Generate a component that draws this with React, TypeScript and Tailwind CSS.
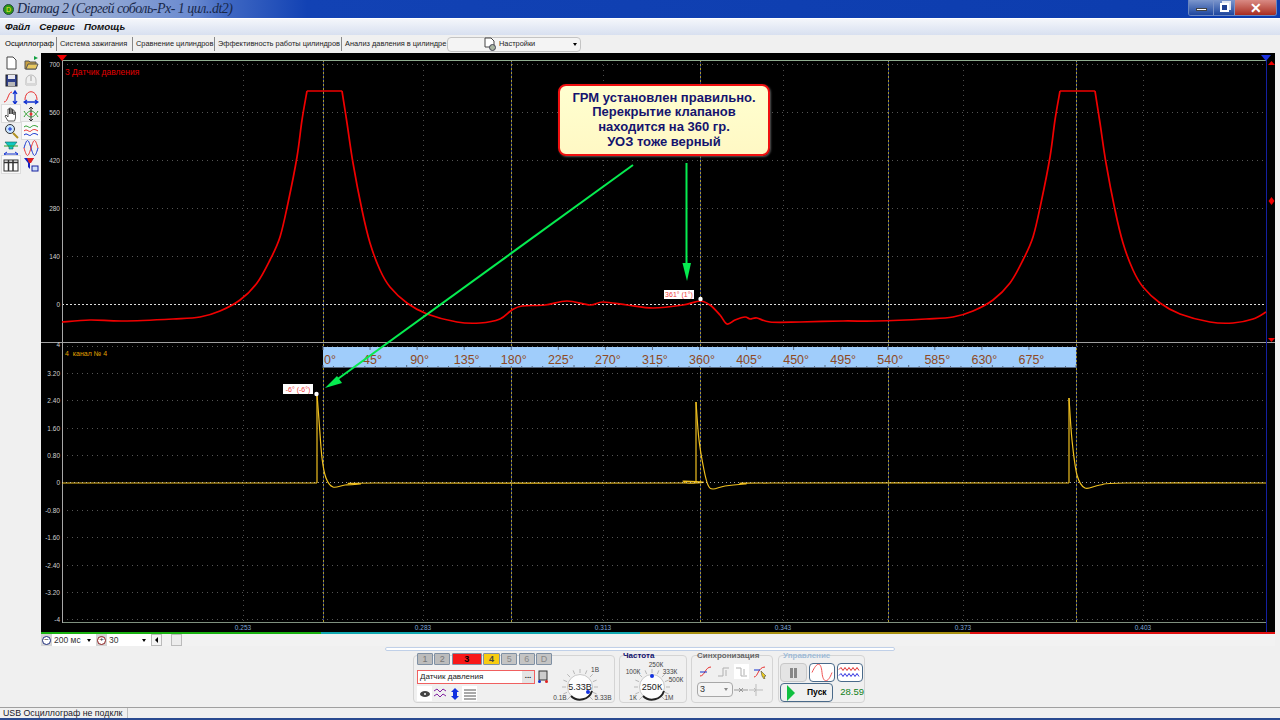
import React from 'react'

const SANS = "font-['Liberation_Sans',Arial,sans-serif]"

const upperGrid = [64, 112, 160, 208, 256]
const lowerGrid = [346, 373, 400, 428, 455, 510, 537, 565, 592, 619]
const timeGrid = [
  { x: 243, label: '0.253' },
  { x: 423, label: '0.283' },
  { x: 603, label: '0.313' },
  { x: 783, label: '0.343' },
  { x: 963, label: '0.373' },
  { x: 1143, label: '0.403' },
]
const phaseLines = [323, 511, 700, 888, 1076]
const upperTicks = [
  { y: 64, label: '700' },
  { y: 112, label: '560' },
  { y: 160, label: '420' },
  { y: 208, label: '280' },
  { y: 256, label: '140' },
  { y: 304, label: '0' },
]
const lowerTicks = [
  { y: 344, label: '4' },
  { y: 373, label: '3.20' },
  { y: 400, label: '2.40' },
  { y: 428, label: '1.60' },
  { y: 455, label: '0.80' },
  { y: 482, label: '0' },
  { y: 510, label: '-0.80' },
  { y: 537, label: '-1.60' },
  { y: 565, label: '-2.40' },
  { y: 592, label: '-3.20' },
  { y: 619, label: '-4' },
]
const degrees = Array.from({ length: 16 }, (_, i) => i * 45)

// catmull-rom through the sampled points, corners are breaks between segments
function smooth(points: string) {
  const pts = points.split(' ').map((p) => p.split(',').map(Number))
  let d = `M${pts[0][0]} ${pts[0][1]}`
  for (let i = 0; i < pts.length - 1; i++) {
    const p0 = pts[i - 1] ?? pts[i]
    const p1 = pts[i]
    const p2 = pts[i + 1]
    const p3 = pts[i + 2] ?? p2
    const c1x = p1[0] + (p2[0] - p0[0]) / 6
    const c1y = p1[1] + (p2[1] - p0[1]) / 6
    const c2x = p2[0] - (p3[0] - p1[0]) / 6
    const c2y = p2[1] - (p3[1] - p1[1]) / 6
    d += `C${c1x} ${c1y} ${c2x} ${c2y} ${p2[0]} ${p2[1]}`
  }
  return d
}

const pressure = [
  '62,322 90,320 123,321 173,319 200,317 220,311 240,300 257,283 270,260 280,237 288,203 297,157 302,120 307,91',
  '307,91 342,91',
  '342,91 347,123 353,163 362,210 370,243 380,270 390,287 407,303 427,314 457,322 480,323 500,319 512,310 522,306 545,305 567,301 590,305 603,302 627,305 653,308 683,305 700,301 710,305 720,315 727,324 735,320 745,317 750,319 757,318 770,322 800,322 843,321 876,321 926,319 953,317 973,311 993,300 1010,283 1023,260 1033,237 1041,203 1050,157 1055,120 1060,91',
  '1060,91 1095,91',
  '1095,91 1100,123 1106,163 1115,210 1123,243 1133,270 1143,287 1160,303 1180,314 1210,322 1233,323 1253,319 1266,312',
]
const ignition = [
  '62,483 317,483',
  '317,483 317,394',
  '317,394 319,420 322,458 326,478 333,487 345,485 360,484 375,483 680,483 683,481 686,483 696,483',
  '696,483 696,402',
  '696,402 699,440 704,470 708,485 713,489 725,486 745,484 770,483 1069,483',
  '1069,483 1069,398',
  '1069,398 1072,440 1077,475 1085,488 1100,485 1125,483 1266,483',
]

function Oscilloscope() {
  return (
    <svg viewBox="41 53 1234 579" className="block h-[579px] w-[1234px] bg-black">
      {upperGrid.concat(lowerGrid).map((y) => (
        <line key={y} x1={62} x2={1266} y1={y + 0.5} y2={y + 0.5} stroke="#555" strokeDasharray="1 4" />
      ))}
      {timeGrid.map((t) => (
        <line key={t.x} x1={t.x + 0.5} x2={t.x + 0.5} y1={60} y2={622} stroke="#4d4d4d" strokeDasharray="1 4" />
      ))}
      {phaseLines.map((x) => (
        <g key={x}>
          <line x1={x + 0.5} x2={x + 0.5} y1={60} y2={622} stroke="#23307a" />
          <line x1={x + 0.5} x2={x + 0.5} y1={60} y2={622} stroke="#a89a30" strokeDasharray="2 2" />
        </g>
      ))}
      <line x1={62} x2={1266} y1={304.5} y2={304.5} stroke="#ddd" strokeDasharray="2 2" />
      <line x1={62} x2={1266} y1={60.5} y2={60.5} stroke="#90ad90" />
      <line x1={62} x2={1266} y1={622.5} y2={622.5} stroke="#7f907f" />
      <line x1={41} x2={1275} y1={342.5} y2={342.5} stroke="#a0a0a0" />
      <line x1={62.5} x2={62.5} y1={60} y2={623} stroke="#a8a8a8" />
      <line x1={1266.5} x2={1266.5} y1={60} y2={632} stroke="#1420a0" />

      <polygon points="57,55 67,55 62,61" fill="#f00000" />
      <polygon points="1261,55 1271,55 1266,61" fill="#1a30e0" />
      <polygon points="1268,65 1275,65 1271.5,61" fill="#f00000" />
      <polygon points="1271.5,197 1274.5,201 1271.5,205 1268.5,201" fill="#f00000" />
      <polygon points="1268,338 1275,338 1271.5,342" fill="#f00000" />

      {upperTicks.concat(lowerTicks).map((t) => (
        <text key={t.y} x={60} y={t.y + 2.5} textAnchor="end" fontSize={6.5} fontFamily="Liberation Sans" fill="#d0d0d0">
          {t.label}
        </text>
      ))}
      {timeGrid.map((t) => (
        <text key={t.x} x={t.x} y={630} textAnchor="middle" fontSize={6.5} fontFamily="Liberation Sans" fill="#7fa6d8">
          {t.label}
        </text>
      ))}
      <text x={65} y={75} fontSize={8.5} fontFamily="Liberation Sans" fill="#e00000">
        3 Датчик давления
      </text>
      <text x={65} y={356} fontSize={7} fontFamily="Liberation Sans" fill="#e0a000" xmlSpace="preserve">
        4  канал № 4
      </text>

      <rect x={323} y={347} width={753} height={21} fill="#a0cdfb" />
      <line x1={323} x2={1076} y1={367.5} y2={367.5} stroke="#5a6a80" />
      {Array.from({ length: 73 }, (_, i) => 323 + (i * 753) / 72).map((x, i) => (
        <line key={x} x1={x} x2={x} y1={i % 8 === 0 ? 365 : 366} y2={368} stroke="#5a6a80" />
      ))}
      {degrees.map((d) => (
        <line key={d} x1={323 + (d * 753) / 720} x2={323 + (d * 753) / 720} y1={347} y2={350} stroke="#5a6a80" />
      ))}
      {degrees.map((d) => (
        <text
          key={d}
          x={d === 0 ? 324 : 325.5 + (d * 753) / 720}
          y={364}
          textAnchor={d === 0 ? 'start' : 'middle'}
          fontSize={12.5}
          fontFamily="Liberation Sans"
          fill="#8f4a24"
        >
          {d}°
        </text>
      ))}

      {pressure.map((p) => (
        <path key={p} d={smooth(p)} fill="none" stroke="#f00000" strokeWidth={1.7} strokeLinejoin="round" />
      ))}
      {ignition.map((p) => (
        <path key={p} d={smooth(p)} fill="none" stroke="#f0c020" strokeWidth={1.2} />
      ))}
      <line x1={62} x2={1266} y1={482.5} y2={482.5} stroke="#ddd" strokeOpacity={0.7} strokeDasharray="1 3" />

      <rect x={664} y={290} width={30} height={9} fill="#fff" />
      <text x={679} y={297} textAnchor="middle" fontSize={7} fontFamily="Liberation Sans" fill="#f04040">
        361° (1°)
      </text>
      <circle cx={700.5} cy={299} r={2.2} fill="#fff" />
      <rect x={283} y={384} width={30} height={10} fill="#fff" />
      <text x={298} y={392} textAnchor="middle" fontSize={7} fontFamily="Liberation Sans" fill="#f04040">
        -6° (-6°)
      </text>
      <circle cx={316.5} cy={394} r={2.2} fill="#fff" />

      <line x1={633} y1={165} x2={335} y2={381} stroke="#06ec50" strokeWidth={2} />
      <polygon points="325,388 337,376 342,383" fill="#06ec50" />
      <line x1={686.5} y1={163} x2={686.5} y2={270} stroke="#06ec50" strokeWidth={2} />
      <polygon points="687,281 682.5,263 691,263" fill="#06ec50" />
    </svg>
  )
}

function Callout() {
  return (
    <div className={`absolute left-[517px] top-[31px] flex h-[72px] w-[212px] flex-col items-center justify-center rounded-lg border-2 border-[#f01010] bg-gradient-to-b from-[#ffffd0] to-[#fff8c4] text-center text-[13px] font-bold leading-[14.6px] text-[#14146e] shadow-[1px_1px_2px_#555] ${SANS}`}>
      <span>ГРМ установлен правильно.</span>
      <span>Перекрытие клапанов</span>
      <span>находится на 360 гр.</span>
      <span>УОЗ тоже верный</span>
    </div>
  )
}

function ToolIcon({ children, active }: { children: React.ReactNode; active?: boolean }) {
  return (
    <div className={`flex h-[17px] w-[18px] items-center justify-center ${active ? 'bg-[#fafafa] outline outline-1 outline-[#dcdcdc]' : ''}`}>
      <svg viewBox="0 0 16 16" className="h-4 w-4">
        {children}
      </svg>
    </div>
  )
}

function Toolbar() {
  return (
    <div className="grid w-[41px] shrink-0 grid-cols-2 content-start gap-x-px gap-y-0 pl-[2px] pt-[1px]">
      <ToolIcon>
        <path d="M4 2h6l3 3v9H4z" fill="#fff" stroke="#444" />
      </ToolIcon>
      <ToolIcon>
        <path d="M2 6h4l1 1h6v7H2z" fill="#c8a040" stroke="#555" />
        <path d="M3 14l2-5h10l-2 5z" fill="#e8c860" stroke="#555" />
        <path d="M11 1l4 2-4 2z" fill="#10a040" />
      </ToolIcon>
      <ToolIcon>
        <rect x="3" y="3" width="11" height="11" fill="#30408a" stroke="#222" />
        <rect x="5" y="3" width="7" height="4" fill="#e8e8f0" />
        <rect x="5" y="10" width="7" height="4" fill="#b8b8b8" />
      </ToolIcon>
      <ToolIcon>
        <path d="M3 13V8a5 5 0 0 1 10 0v5z" fill="none" stroke="#b8b8b8" />
        <path d="M8 4v5" stroke="#a0a0a0" />
        <rect x="3" y="11" width="10" height="3" fill="#d8d8d8" />
      </ToolIcon>
      <ToolIcon>
        <path d="M1 13c4 0 4-10 8-10" fill="none" stroke="#e83030" />
        <path d="M12 3v11M10 5l2-3 2 3M10 12l2 3 2-3" fill="none" stroke="#1030d0" strokeWidth="1.3" />
      </ToolIcon>
      <ToolIcon>
        <path d="M2 11C2 0 14 0 14 11" fill="none" stroke="#e83030" />
        <path d="M2 13h12M4 11l-3 2 3 2M12 11l3 2-3 2" fill="none" stroke="#1030d0" strokeWidth="1.3" />
      </ToolIcon>
      <ToolIcon active>
        <path d="M5 15L2 10l1-1 2 2V3h1.500v5V2H8v6V3h1.500v5V4H11v5V6h1.500v6l-1 3z" fill="#fff" stroke="#333" strokeWidth=".8" />
      </ToolIcon>
      <ToolIcon>
        <path d="M1 5c5 8 9 8 14 0M1 11c5-8 9-8 14 0" fill="none" stroke="#30a030" />
        <path d="M8 1v14M6 3l2-2 2 2M6 13l2 2 2-2" fill="none" stroke="#333" />
        <circle cx="8" cy="8" r="1.500" fill="#e83030" />
      </ToolIcon>
      <ToolIcon>
        <circle cx="7" cy="6" r="4.500" fill="#c8e4ff" stroke="#333" />
        <path d="M5 6h4M7 4v4" stroke="#1030d0" />
        <path d="M10 10l5 5" stroke="#b09020" strokeWidth="2" />
      </ToolIcon>
      <ToolIcon active>
        <path d="M1 4c3-3 5 2 7 0s4-2 7 0" fill="none" stroke="#30a030" />
        <path d="M1 8c3-3 5 2 7 0s4-2 7 0" fill="none" stroke="#e83030" />
        <path d="M1 12c3-3 5 2 7 0s4-2 7 0" fill="none" stroke="#1030d0" />
      </ToolIcon>
      <ToolIcon>
        <path d="M2 2h12l-4 5v2H6V7z" fill="#10c8c0" stroke="#106060" strokeWidth=".6" />
        <path d="M1 6l14 0" stroke="#30a030" />
        <path d="M2 14h12M4 12l-3 2 3 2M12 12l3 2-3 2" fill="none" stroke="#1030d0" />
      </ToolIcon>
      <ToolIcon>
        <path d="M1 8c3-10 4-10 7 0s4 10 7 0" fill="none" stroke="#1030d0" />
        <path d="M1 8c3 10 4 10 7 0s4-10 7 0" fill="none" stroke="#e83030" />
      </ToolIcon>
      <ToolIcon active>
        <rect x="1" y="3" width="14" height="11" fill="#fff" stroke="#333" />
        <path d="M1 5.500h14M5.500 3v11M10 3v11" stroke="#333" strokeWidth="1.500" />
      </ToolIcon>
      <ToolIcon>
        <path d="M1 1h10L7 6v6L5 10V6z" fill="#1420c0" />
        <path d="M4 1h7L8 6H6z" fill="#e02020" />
        <rect x="9" y="9" width="6" height="5" fill="#d0e0f8" stroke="#1420a0" />
      </ToolIcon>
    </div>
  )
}

const tabs = [
  { label: 'Система зажигания', w: 'w-[76px]' },
  { label: 'Сравнение цилиндров', w: 'w-[82px]' },
  { label: 'Эффективность работы цилиндров', w: 'w-[127px]' },
  { label: 'Анализ давления в цилиндре', w: 'w-[101px]' },
]

function TabRow() {
  return (
    <div className={`flex h-[18px] items-center bg-[#f0f0f0] pl-[5px] text-[7.4px] text-[#222] ${SANS}`}>
      <div className="w-[51px] whitespace-nowrap text-[7.6px] font-medium text-black">Осциллограф</div>
      {tabs.map((t) => (
        <div key={t.label} className={`${t.w} h-[14px] whitespace-nowrap border-l border-[#888] pl-[3px] leading-[14px]`}>
          {t.label}
        </div>
      ))}
      <div className="ml-[5px] flex h-[15px] w-[134px] items-center rounded-sm border border-[#c4c4c4] bg-[#f4f4f4] pl-[35px] pr-[3px]">
        <svg viewBox="0 0 14 14" className="h-[14px] w-[14px]">
          <path d="M2 1h6l3 3v6H2z" fill="#fff" stroke="#444" />
          <circle cx="9.500" cy="10.500" r="3" fill="#a8b4a0" stroke="#445" />
        </svg>
        <span className="ml-[2px]">Настройки</span>
        <span className="ml-auto h-0 w-0 border-x-[2.5px] border-t-[3px] border-x-transparent border-t-black" />
      </div>
    </div>
  )
}

function WindowControls() {
  return (
    <div className="mr-[3px] flex h-[16px] overflow-hidden rounded-b-[3px] border border-t-0 border-[#6a86c0]">
      <div className="flex w-[24px] items-center justify-center bg-gradient-to-b from-[#7c96cc] to-[#1f469e]">
        <span className="mt-[4px] h-[3px] w-[11px] border border-[#444] bg-white" />
      </div>
      <div className="flex w-[22px] items-center justify-center border-x border-[#7a92c8] bg-gradient-to-b from-[#7c96cc] to-[#1f469e]">
        <span className="relative h-[9px] w-[9px] border-2 border-white bg-[#1f3f90] shadow-[2px_-2px_0_0_#dfe4f0]" />
      </div>
      <div className={`flex w-[41px] items-center justify-center bg-gradient-to-b from-[#d98a84] to-[#a82a20] text-[14px] font-bold leading-none text-white ${SANS}`}>
        ✕
      </div>
    </div>
  )
}

const channels = [
  { label: '1', cls: 'w-[17px] bg-[#bcbcbc] text-[#777]' },
  { label: '2', cls: 'w-[17px] bg-[#bcbcbc] text-[#777]' },
  { label: '3', cls: 'w-[32px] bg-[#f81818] text-black font-bold' },
  { label: '4', cls: 'w-[18px] bg-[#f8cc10] text-[#444] font-bold' },
  { label: '5', cls: 'w-[17px] bg-[#c4c4c4] text-[#888]' },
  { label: '6', cls: 'w-[17px] bg-[#c4c4c4] text-[#888]' },
  { label: 'D', cls: 'w-[17px] bg-[#c4c4c4] text-[#888]' },
]

interface KnobProps {
  value: string
  size: [number, number]
  cx: number
  cy: number
  marker: [number, number]
  labels: { x: number; y: number; t: string }[]
}

function Knob({ value, size, cx, cy, marker, labels }: KnobProps) {
  return (
    <svg viewBox={`0 0 ${size[0]} ${size[1]}`} width={size[0]} height={size[1]} className="block shrink-0">
      {Array.from({ length: 13 }, (_, i) => (-135 + i * 22.5) * (Math.PI / 180)).map((a) => (
        <line
          key={a}
          x1={cx + Math.sin(a) * 14}
          y1={cy - Math.cos(a) * 14}
          x2={cx + Math.sin(a) * 18}
          y2={cy - Math.cos(a) * 18}
          stroke="#b8b8b8"
        />
      ))}
      <circle cx={cx} cy={cy} r={12.5} fill="#fdfdfd" stroke="#c8c8c8" />
      <path d={`M${cx - 9} ${cy + 9}A12.700 12.700 0 0 0 ${cx + 12} ${cy + 4}`} fill="none" stroke="#222" strokeWidth="2" />
      <text x={cx} y={cy + 3} textAnchor="middle" fontSize={9} fontFamily="Liberation Sans" fill="#222">
        {value}
      </text>
      <circle cx={marker[0]} cy={marker[1]} r={2} fill="#1030e0" />
      {labels.map((l) => (
        <text key={l.t} x={l.x} y={l.y} textAnchor="middle" fontSize={6.5} fontFamily="Liberation Sans" fill="#444">
          {l.t}
        </text>
      ))}
    </svg>
  )
}

function SmallIcon({ children, active }: { children: React.ReactNode; active?: boolean }) {
  return (
    <div className={`flex h-[15px] w-[15px] shrink-0 items-center justify-center ${active ? 'bg-white' : ''}`}>
      <svg viewBox="0 0 14 14" className="h-[14px] w-[14px]">
        {children}
      </svg>
    </div>
  )
}

function ChannelPanel() {
  return (
    <div className={`flex h-[48px] w-[202px] rounded border border-[#d4d4d4] pl-[3px] ${SANS}`}>
      <div className="w-[135px] shrink-0">
        <div className="-mt-[3px] flex gap-[1.5px]">
          {channels.map((c) => (
            <div key={c.label} className={`${c.cls} h-[12px] rounded-[1px] border border-[#7f90a4] text-center text-[9px] leading-[11px]`}>
              {c.label}
            </div>
          ))}
        </div>
        <div className="mt-[5px] flex items-center">
          <div className="flex h-[14px] w-[118px] items-center justify-between border border-[#f06060] bg-white pl-[2px] text-[8px] text-[#222]">
            Датчик давления
            <span className="h-[12px] w-[12px] bg-[#e4e4e4] text-center text-[8px] font-bold leading-[9px]">...</span>
          </div>
          <svg viewBox="0 0 12 14" className="ml-[2px] h-[14px] w-[12px]">
            <rect x="2" y="1" width="8" height="9" fill="#ccc" stroke="#333" />
            <circle cx="2.500" cy="11.500" r="1.500" fill="#1030d0" />
            <circle cx="9.500" cy="11.500" r="1.500" fill="#e02020" />
          </svg>
        </div>
        <div className="mt-[2px] flex">
          <SmallIcon active>
            <ellipse cx="7" cy="7" rx="5" ry="3" fill="#444" />
            <circle cx="7" cy="7" r="1" fill="#fff" />
          </SmallIcon>
          <SmallIcon>
            <path d="M1 4l3-2 3 3 3-3 3 2M1 9l3-2 3 3 3-3 3 2" fill="none" stroke="#8020a0" />
          </SmallIcon>
          <SmallIcon>
            <path d="M7 1l4 4H9v4h2l-4 4-4-4h2V5H3z" fill="#1030e0" />
          </SmallIcon>
          <SmallIcon active>
            <path d="M1 3h12M1 6h12M1 9h12M1 12h12" stroke="#555" />
          </SmallIcon>
        </div>
      </div>
      <Knob
        value="5.33В"
        size={[62, 46]}
        cx={28}
        cy={31}
        marker={[36, 36]}
        labels={[
          { x: 43, y: 16, t: '1В' },
          { x: 8, y: 44, t: '0.1В' },
          { x: 51, y: 44, t: '5.33В' },
        ]}
      />
    </div>
  )
}

function GroupTitle({ children, cls }: { children: React.ReactNode; cls: string }) {
  return <div className={`-mt-[5px] h-[10px] pl-[3px] text-[8px] font-bold leading-[10px] ${cls}`}>{children}</div>
}

function FrequencyPanel() {
  return (
    <div className={`h-[48px] w-[68px] rounded border border-[#d4d4d4] ${SANS}`}>
      <GroupTitle cls="text-[#10106e]">Частота</GroupTitle>
      <Knob
        value="250К"
        size={[66, 40]}
        cx={32}
        cy={26}
        marker={[32, 15]}
        labels={[
          { x: 36, y: 6, t: '250К' },
          { x: 13, y: 13, t: '100К' },
          { x: 50, y: 13, t: '333К' },
          { x: 56, y: 21, t: '500К' },
          { x: 13, y: 39, t: '1К' },
          { x: 49, y: 39, t: '1М' },
        ]}
      />
    </div>
  )
}

function SyncPanel() {
  return (
    <div className={`h-[48px] w-[82px] rounded border border-[#d4d4d4] pl-[5px] ${SANS}`}>
      <GroupTitle cls="-ml-[3px] text-[#666]">Синхронизация</GroupTitle>
      <div className="ml-[1px] mt-[3px] flex gap-[3px]">
        <SmallIcon>
          <path d="M1 11C6 11 6 2 12 2" fill="none" stroke="#e83030" />
          <path d="M1 7h7" stroke="#1030d0" />
        </SmallIcon>
        <SmallIcon>
          <path d="M1 11h5V3h6M9 5v6" fill="none" stroke="#b0b0b0" />
        </SmallIcon>
        <SmallIcon active>
          <path d="M1 3h5v8h6M9 4v6" fill="none" stroke="#b0b0b0" />
        </SmallIcon>
        <SmallIcon>
          <path d="M1 12C5 12 5 2 12 2" fill="none" stroke="#e83030" />
          <path d="M1 5h6" stroke="#1030d0" />
          <path d="M8 6l5 5-2 .5 1 2-1 .5-2-3z" fill="#f0d020" stroke="#333" strokeWidth=".5" />
        </SmallIcon>
      </div>
      <div className="mt-[3px] flex items-center">
        <div className="flex h-[15px] w-[36px] items-center justify-between rounded-sm border border-[#a8a8a8] bg-[#f4f4f4] px-[2px] text-[9px] text-[#333]">
          3<span className="mr-[2px] h-0 w-0 border-x-[2.5px] border-t-[3px] border-x-transparent border-t-[#888]" />
        </div>
        <SmallIcon>
          <path d="M0 7h14M5 5l2 2-2 2M9 5L7 7l2 2" fill="none" stroke="#999" />
        </SmallIcon>
        <SmallIcon>
          <path d="M0 7h14M7 1v12M5 5l2 2-2 2" fill="none" stroke="#bbb" />
        </SmallIcon>
      </div>
    </div>
  )
}

function ControlPanel() {
  return (
    <div className={`ml-[1px] h-[48px] w-[87px] rounded border border-[#d4d4d4] pl-[1px] ${SANS}`}>
      <GroupTitle cls="text-[#a0bcd8]">Управление</GroupTitle>
      <div className="mt-[2px] flex gap-[2px]">
        <div className="flex h-[19px] w-[27px] items-center justify-center gap-px rounded-sm border border-[#c8c8c8] bg-[#e4e4e4]">
          <span className="h-[10px] w-[3px] bg-[#888]" />
          <span className="h-[10px] w-[3px] bg-[#888]" />
        </div>
        <div className="h-[19px] w-[26px] rounded-sm border border-[#4a6a8a] bg-white">
          <svg viewBox="0 0 24 16" className="block h-full w-full">
            <path d="M2 8c5-11 9-11 10 0s6 11 10 0" fill="none" stroke="#f05050" />
          </svg>
        </div>
        <div className="h-[19px] w-[26px] rounded-sm border border-[#4a6a8a] bg-white">
          <svg viewBox="0 0 24 16" className="block h-full w-full">
            <path d="M1 5l2-2 2 3 2-3 2 3 2-3 2 3 2-3 2 3 2-3 2 3" fill="none" stroke="#e03030" />
            <path d="M1 11l2-2 2 3 2-3 2 3 2-3 2 3 2-3 2 3 2-3 2 3" fill="none" stroke="#3030e0" />
          </svg>
        </div>
      </div>
      <div className="mt-[1px] flex items-center">
        <div className="flex h-[19px] w-[55px] items-center rounded-sm border border-[#4a6a8a] bg-[#f0f0f0] pl-[6px] text-[8.5px] font-bold text-black">
          <span className="h-0 w-0 border-y-[8px] border-l-[8px] border-y-transparent border-l-[#10c040]" />
          <span className="ml-[12px]">Пуск</span>
        </div>
        <span className="ml-[7px] text-[9.5px] text-[#108020]">28.59</span>
      </div>
    </div>
  )
}

function ScrollRow() {
  return (
    <div className={`flex h-[12px] items-center bg-[#f2f2f2] text-[8.5px] text-[#333] ${SANS}`}>
      <div className="flex h-[12px] w-[11px] items-center justify-center bg-[#d4d4d4]">
        <span className="flex h-[9px] w-[9px] items-center justify-center rounded-full border border-[#1a2a7a] bg-white text-[8px] leading-none">−</span>
      </div>
      <div className="flex h-full w-[44px] items-center justify-between bg-white pl-[2px] pr-[5px]">
        200 мс
        <span className="h-0 w-0 border-x-[2.5px] border-t-[3px] border-x-transparent border-t-black" />
      </div>
      <div className="flex h-[12px] w-[11px] items-center justify-center bg-[#d4d4d4]">
        <span className="flex h-[9px] w-[9px] items-center justify-center rounded-full border border-[#8a1a1a] bg-white text-[8px] leading-none">+</span>
      </div>
      <div className="flex h-full w-[44px] items-center justify-between bg-white pl-[2px] pr-[5px]">
        30
        <span className="h-0 w-0 border-x-[2.5px] border-t-[3px] border-x-transparent border-t-black" />
      </div>
      <div className="flex h-full w-[11px] items-center justify-center border border-[#bbb] bg-[#f4f4f4]">
        <span className="h-0 w-0 border-y-[3px] border-r-[3px] border-y-transparent border-r-black" />
      </div>
      <div className="w-[9px]" />
      <div className="h-full w-[11px] border border-[#bbb] bg-[#ececec]" />
      <div className="flex-1 bg-[#f6f6f6]" />
    </div>
  )
}

export default function App() {
  return (
    <div className={`flex h-[720px] w-[1280px] flex-col overflow-hidden bg-[#f0f0f0] ${SANS}`}>
      <div className="flex h-[18px] shrink-0 items-start justify-between bg-[linear-gradient(90deg,#a8b6d4_0%,#92a8d4_8%,#6a8ad0_15%,#3d66c2_18%,#1242b4_24%,#0c3cae_100%)]">
        <div className="flex items-center pl-[3px]">
          <span className="mt-px flex h-[11px] w-[11px] items-center justify-center rounded-full border border-[#244] bg-[#2e9a10] text-[7px] leading-none text-[#f0e040]">D</span>
          <span className="ml-[3px] font-['Liberation_Serif',serif] text-[14px] italic leading-[18px] tracking-[-0.5px] text-[#18284a]">
            Diamag 2 (Сергей соболь-Рх- 1 цил..dt2)
          </span>
        </div>
        <WindowControls />
      </div>

      <div className="flex h-[17px] shrink-0 items-center gap-[9px] border-t border-white bg-gradient-to-b from-[#f4f6fb] to-[#d8e0f0] pl-[5px] text-[9.8px] font-bold italic text-[#111]">
        <span>Файл</span>
        <span>Сервис</span>
        <span>Помощь</span>
      </div>

      <TabRow />

      <div className="flex shrink-0">
        <Toolbar />
        <div className="relative w-[1234px]">
          <Oscilloscope />
          <Callout />
          <div className="flex h-[2px]">
            <div className="w-[280px] bg-[#18b010]" />
            <div className="w-[319px] bg-[#10a8b0]" />
            <div className="w-[330px] bg-[#a89010]" />
            <div className="flex-1 bg-[#e01010]" />
          </div>
          <ScrollRow />
        </div>
      </div>

      <div className="flex h-[61px] shrink-0 flex-col">
        <div className="ml-[385px] mt-[1px] h-[4px] w-[510px] rounded-sm border border-[#c0d0e8] bg-white" />
        <div className="ml-[413px] mt-[4px] flex gap-[4px]">
          <ChannelPanel />
          <FrequencyPanel />
          <SyncPanel />
          <ControlPanel />
        </div>
      </div>

      <div className="flex h-[11px] shrink-0 border-t border-[#a0a0a0] text-[8.8px] font-medium leading-[10px] text-[#1a1a2a]">
        <div className="w-[128px] whitespace-nowrap border-r border-[#c0c0c0] pl-[3px]">USB Осциллограф не подклк</div>
      </div>
      <div className="h-[2px] shrink-0 bg-[#2a4a90]" />
    </div>
  )
}
